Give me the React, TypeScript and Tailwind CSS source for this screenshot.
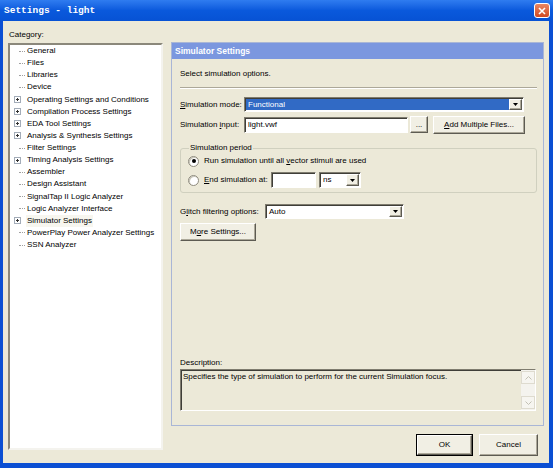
import React from 'react';

const sunken =
  'border border-t-[#7f7c6f] border-l-[#7f7c6f] border-b-white border-r-white shadow-[inset_1px_1px_0_#3f3e38]';
const raised =
  'border border-t-white border-l-white border-b-[#5d5b52] border-r-[#5d5b52] shadow-[inset_-1px_-1px_0_#aca899] bg-[#f1efe4]';

const treeItems: { label: string; plus?: boolean; active?: boolean }[] = [
  { label: 'General' },
  { label: 'Files' },
  { label: 'Libraries' },
  { label: 'Device' },
  { label: 'Operating Settings and Conditions', plus: true },
  { label: 'Compilation Process Settings', plus: true },
  { label: 'EDA Tool Settings', plus: true },
  { label: 'Analysis & Synthesis Settings', plus: true },
  { label: 'Filter Settings' },
  { label: 'Timing Analysis Settings', plus: true },
  { label: 'Assembler' },
  { label: 'Design Assistant' },
  { label: 'SignalTap II Logic Analyzer' },
  { label: 'Logic Analyzer Interface' },
  { label: 'Simulator Settings', plus: true, active: true },
  { label: 'PowerPlay Power Analyzer Settings' },
  { label: 'SSN Analyzer' },
];

function PlusBox() {
  return (
    <svg width="7" height="7" viewBox="0 0 7 7" className="ml-[4px] mr-[6px]">
      <rect x="0.5" y="0.5" width="6" height="6" fill="#fff" stroke="#a3acb8" />
      <path d="M2 3.5h3M3.5 2v3" stroke="#333" strokeWidth="1" />
    </svg>
  );
}

function ArrowButton() {
  return (
    <div className={`${raised} w-[13px] h-full flex items-center justify-center`}>
      <svg width="5" height="3" viewBox="0 0 5 3">
        <path d="M0 0h5L2.5 3z" fill="#000" />
      </svg>
    </div>
  );
}

function Select({ className, value, selected }: { className: string; value: string; selected?: boolean }) {
  return (
    <div className={`${sunken} ${className} flex bg-white p-[1px]`}>
      <div
        className={`flex-1 flex items-center pl-[2px] ${
          selected ? 'bg-[#316ac5] text-white' : 'text-black'
        }`}
      >
        {value}
      </div>
      <ArrowButton />
    </div>
  );
}

function Radio({ checked }: { checked?: boolean }) {
  return (
    <div className="w-[11px] h-[11px] rounded-full border border-[#8e8b7e] bg-white shadow-[inset_1px_1px_0_#c9c6b8] flex items-center justify-center">
      {checked && <div className="w-[4px] h-[4px] rounded-full bg-black" />}
    </div>
  );
}

function ScrollBtn({ up }: { up?: boolean }) {
  return (
    <div className="h-[13px] border border-[#dedbcf] bg-[#f6f5f0] flex items-center justify-center">
      <svg width="7" height="4" viewBox="0 0 7 4">
        <path d={up ? 'M0.5 3.5L3.5 0.5L6.5 3.5' : 'M0.5 0.5L3.5 3.5L6.5 0.5'} fill="none" stroke="#c2c0b4" />
      </svg>
    </div>
  );
}

export default function App() {
  return (
    <div className="w-[553px] h-[468px] flex flex-col bg-[#0b4fd3] font-['Liberation_Sans',Arial,sans-serif] text-[8px] text-black leading-[12px] overflow-hidden">
      {/* title bar */}
      <div className="h-[21px] flex items-center justify-between pl-[4px] pr-[3px] bg-gradient-to-b from-[#2f7cf0] via-[#0a59dc] to-[#0752d4]">
        <span className="font-['Liberation_Mono',monospace] font-bold text-[9.5px] text-white">Settings - light</span>
        <div className="w-[16px] h-[15px] rounded-[3px] border border-white bg-gradient-to-b from-[#ea8661] to-[#d1481f] flex items-center justify-center">
          <svg width="8" height="8" viewBox="0 0 8 8">
            <path d="M1 1L7 7M7 1L1 7" stroke="#fff" strokeWidth="1.6" />
          </svg>
        </div>
      </div>

      {/* body */}
      <div className="flex-1 ml-[3px] mr-[4px] mb-[5px] bg-[#ece9d8] flex gap-[8px] pl-[5px] pr-[5px] pt-[8px]">
        {/* category tree */}
        <div className="w-[155px] shrink-0 flex flex-col">
          <div className="h-[12px] mb-[2px] pl-[1px]">Category:</div>
          <div className="h-[407px] bg-white border-2 border-t-[#8b887b] border-l-[#8b887b] border-b-[#f4f3ee] border-r-[#f4f3ee]">
            {treeItems.map((it) => (
              <div key={it.label} className="h-[12.125px] flex items-center">
                <div className="w-[17px] flex items-center">
                  {it.plus ? (
                    <PlusBox />
                  ) : (
                    <div className="ml-[9px] w-[6px] border-t border-dotted border-[#a0a0a0]" />
                  )}
                </div>
                <span className={it.active ? 'bg-[#f7f6ef] px-[1px] -ml-[1px]' : ''}>{it.label}</span>
              </div>
            ))}
          </div>
        </div>

        {/* right side */}
        <div className="flex-1 min-w-0 flex flex-col pt-[13px]">
          <div className="h-[384px] border border-[#a9b6d6] flex flex-col">
            <div className="h-[16px] bg-[#7b97df] text-white font-bold text-[8.5px] flex items-center pl-[3px]">
              Simulator Settings
            </div>
            <div className="flex-1 flex flex-col pl-[8px] pr-[6px] pb-[14px]">
              <div className="mt-[9px]">Select simulation options.</div>
              <div className="mt-[7px] h-[2px] border-t border-[#aca899] border-b border-b-white" />

              <div className="mt-[8px] h-[15px] flex">
                <div className="w-[64px] flex items-center">
                  <u>S</u>imulation mode:
                </div>
                <Select className="w-[280px]" value="Functional" selected />
              </div>

              <div className="mt-[4px] h-[17px] flex items-center">
                <div className="w-[64px]">
                  Simulation <u>i</u>nput:
                </div>
                <div className={`${sunken} w-[164px] h-[16px] bg-white flex items-center pl-[3px]`}>light.vwf</div>
                <div className={`${raised} ml-[2px] w-[18px] h-[17px] flex items-center justify-center`}>...</div>
                <div className={`${raised} ml-[5px] w-[92px] h-[18px] flex items-center justify-center`}>
                  <u>A</u>dd Multiple Files...
                </div>
              </div>

              <fieldset className="mt-[9px] w-[357px] border border-[#d0d0bf] rounded-[3px] pl-[7px] pb-[4px]">
                <legend className="ml-[1px] px-[1px] leading-[12px]">Simulation period</legend>
                <div className="mt-[1px] h-[12px] flex items-center gap-[5px]">
                  <Radio checked />
                  <span>
                    Run simulation until all <u>v</u>ector stimuli are used
                  </span>
                </div>
                <div className="mt-[5px] h-[16px] flex items-center">
                  <Radio />
                  <span className="ml-[5px] w-[67px]">
                    <u>E</u>nd simulation at:
                  </span>
                  <div className={`${sunken} w-[45px] h-[16px] bg-white`} />
                  <Select className="ml-[3px] w-[42px] h-[16px]" value="ns" />
                </div>
              </fieldset>

              <div className="mt-[11px] h-[15px] flex">
                <div className="w-[85px] flex items-center">
                  G<u>l</u>itch filtering options:
                </div>
                <Select className="w-[139px]" value="Auto" />
              </div>

              <div className={`${raised} mt-[4px] w-[76px] h-[18px] flex items-center justify-center`}>
                M<u>o</u>re Settings...
              </div>

              <div className="mt-auto">Description:</div>
              <div className={`${sunken} h-[42px] w-[356px] flex bg-[#ece9d8]`}>
                <div className="flex-1 pl-[2px] pt-[1px]">
                  Specifies the type of simulation to perform for the current Simulation focus.
                </div>
                <div className="w-[14px] flex flex-col justify-between bg-[#f4f3ee] py-[1px]">
                  <ScrollBtn up />
                  <ScrollBtn />
                </div>
              </div>
            </div>
          </div>

          <div className="mt-[8px] flex justify-end gap-[6px] pr-[6px]">
            <div className="w-[57px] h-[22px] border border-black">
              <div className={`${raised} w-full h-full flex items-center justify-center`}>OK</div>
            </div>
            <div className={`${raised} w-[59px] h-[22px] flex items-center justify-center`}>Cancel</div>
          </div>
        </div>
      </div>
    </div>
  );
}
